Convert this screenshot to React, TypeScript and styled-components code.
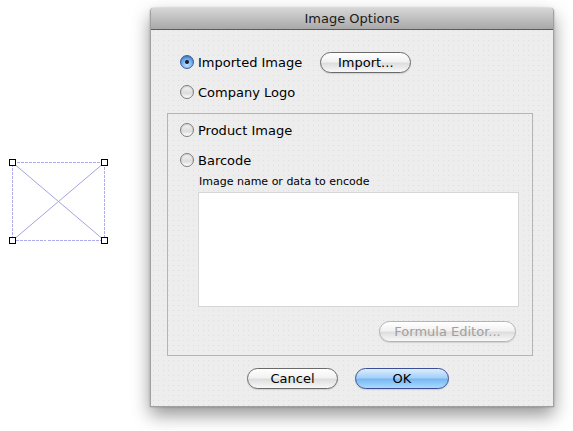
import React from 'react';
import styled, { createGlobalStyle } from 'styled-components';

const GlobalStyle = createGlobalStyle`
  html, body {
    margin: 0;
    padding: 0;
    background: #ffffff;
    font-family: "DejaVu Sans", "Liberation Sans", sans-serif;
  }
`;

const RadioOption = ({ label, checked = false, indent = 13 }: { label: string; checked?: boolean; indent?: number }) => (
  <Row indent={indent}>
    <RadioDot checked={checked} />
    <Label>{label}</Label>
  </Row>
);

const PlaceholderShape = () => (
  <svg width="112" height="90" viewBox="0 0 112 90">
    <g stroke="#acacea" strokeWidth="1" fill="none" shapeRendering="crispEdges">
      <rect x="12.5" y="3.5" width="92" height="78" strokeDasharray="3 1" />
    </g>
    <g stroke="#a4a4de" strokeWidth="1" fill="none">
      <line x1="12.5" y1="3.5" x2="104.5" y2="81.5" />
      <line x1="104.5" y1="3.5" x2="12.5" y2="81.5" />
    </g>
    <g fill="#ffffff" stroke="#000000" strokeWidth="1" shapeRendering="crispEdges">
      <rect x="9.5" y="0.5" width="6" height="6" />
      <rect x="101.5" y="0.5" width="6" height="6" />
      <rect x="9.5" y="78.5" width="6" height="6" />
      <rect x="101.5" y="78.5" width="6" height="6" />
    </g>
  </svg>
);

export default function App() {
  return (
    <>
      <GlobalStyle />
      <Page>
        <Canvas>
          <PlaceholderShape />
        </Canvas>
        <Dialog>
          <TitleBar>Image Options</TitleBar>
          <Body>
            <Row indent={13}>
              <RadioDot checked />
              <Label>Imported Image</Label>
              <PillButton width={91} style={{ marginLeft: 18 }}>Import...</PillButton>
            </Row>
            <Spaced top={8}>
              <RadioOption label="Company Logo" />
            </Spaced>
            <GroupBox>
              <RadioOption label="Product Image" indent={12} />
              <Spaced top={8}>
                <RadioOption label="Barcode" indent={12} />
              </Spaced>
              <Caption>Image name or data to encode</Caption>
              <TextArea />
              <GroupFooter>
                <PillButton width={137} disabled>Formula Editor...</PillButton>
              </GroupFooter>
            </GroupBox>
            <Footer>
              <PillButton width={91}>Cancel</PillButton>
              <PillButton width={94} primary>OK</PillButton>
            </Footer>
          </Body>
        </Dialog>
      </Page>
    </>
  );
}

const Page = styled.div`
  display: flex;
  width: 573px;
  height: 431px;
  overflow: hidden;
`;

const Canvas = styled.div`
  width: 150px;
  flex-shrink: 0;
  padding-top: 159px;
  box-sizing: border-box;

  svg {
    display: block;
  }
`;

const Dialog = styled.div`
  margin-top: 8px;
  width: 404px;
  height: 399px;
  display: flex;
  flex-direction: column;
  border-radius: 4px 4px 0 0;
  background-color: #ededed;
  background-image: radial-gradient(#dedede 0.6px, transparent 0.8px);
  background-size: 5px 5px;
  box-shadow: 0 8px 18px rgba(0, 0, 0, 0.42), 0 0 2px rgba(0, 0, 0, 0.3);
  border: 1px solid #a0a0a0;
  border-top: none;
  box-sizing: border-box;
`;

const TitleBar = styled.div`
  height: 22px;
  box-sizing: border-box;
  border-radius: 4px 4px 0 0;
  background: linear-gradient(#d6d6d6, #a9a9a9);
  border-bottom: 1px solid #5c5c5c;
  text-align: center;
  font-size: 13px;
  line-height: 21px;
  color: #1a1a1a;
`;

const Body = styled.div`
  display: flex;
  flex-direction: column;
  padding: 21px 20px 0 16px;
`;

const Row = styled.div<{ indent: number }>`
  display: flex;
  align-items: center;
  height: 22px;
  padding-left: ${({ indent }) => indent}px;
`;

const Spaced = styled.div<{ top: number }>`
  margin-top: ${({ top }) => top}px;
`;

const RadioDot = styled.span<{ checked?: boolean }>`
  width: 14px;
  height: 14px;
  box-sizing: border-box;
  border-radius: 50%;
  flex-shrink: 0;
  position: relative;
  border: 1px solid ${({ checked }) => (checked ? '#3e5c98' : '#7e7e7e')};
  background: ${({ checked }) =>
    checked
      ? 'radial-gradient(circle at 50% 75%, #c4e4ff 0%, #6aa8ea 55%, #3d78c8 100%)'
      : 'linear-gradient(#f6f6f6, #dcdcdc 60%, #ffffff)'};
  box-shadow: inset 0 1px 1px rgba(0, 0, 0, 0.15);

  &::after {
    content: '';
    display: ${({ checked }) => (checked ? 'block' : 'none')};
    position: absolute;
    left: 4px;
    top: 4px;
    width: 4px;
    height: 4px;
    border-radius: 50%;
    background: #1a1a2a;
  }
`;

const Label = styled.span`
  margin-left: 4px;
  font-size: 13px;
  color: #000000;
  white-space: nowrap;
`;

const GroupBox = styled.div`
  margin-top: 10px;
  width: 366px;
  height: 243px;
  box-sizing: border-box;
  border: 1px solid #b4b4b4;
  padding-top: 5px;
  display: flex;
  flex-direction: column;
`;

const Caption = styled.div`
  margin-top: 4px;
  padding-left: 31px;
  font-size: 11px;
  line-height: 14px;
  color: #000000;
`;

const TextArea = styled.div`
  margin: 3px 0 0 30px;
  width: 321px;
  height: 115px;
  box-sizing: border-box;
  background: #ffffff;
  border: 1px solid #d6d6d6;
`;

const GroupFooter = styled.div`
  display: flex;
  justify-content: flex-end;
  margin-top: 14px;
  padding-right: 16px;
`;

const PillButton = styled.button<{ width: number; primary?: boolean }>`
  width: ${({ width }) => width}px;
  height: 21px;
  padding: 0;
  box-sizing: border-box;
  border-radius: 11px;
  font-family: "DejaVu Sans", "Liberation Sans", sans-serif;
  font-size: 13px;
  line-height: 19px;
  color: ${({ disabled }) => (disabled ? '#a0a0a0' : '#000000')};
  border: 1px solid
    ${({ primary, disabled }) => (primary ? '#3c4f96' : disabled ? '#b4b4b4' : '#6a6a6a')};
  background: ${({ primary }) =>
    primary
      ? 'linear-gradient(#dbeeff 0%, #a6d0f8 45%, #7ab8f2 55%, #a8dcff 100%)'
      : 'linear-gradient(#ffffff 0%, #f2f2f2 45%, #dedede 55%, #f8f8f8 100%)'};
  box-shadow: 0 1px 1px rgba(0, 0, 0, 0.12);
`;

const Footer = styled.div`
  display: flex;
  justify-content: center;
  gap: 17px;
  margin-top: 12px;
  padding-right: 4px;
`;
